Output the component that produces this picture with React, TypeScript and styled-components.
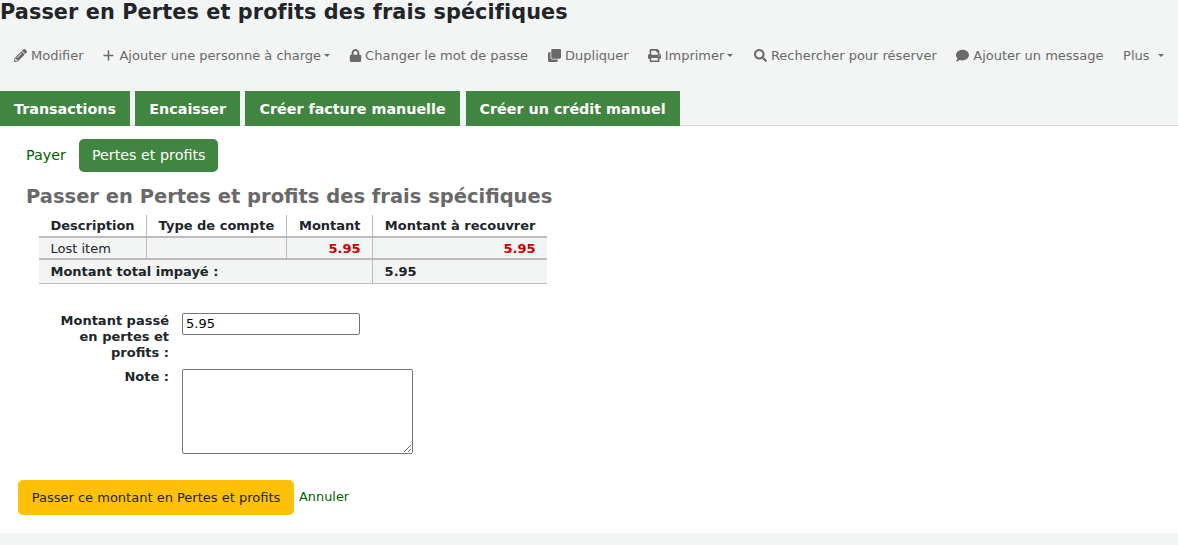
import React, { FC } from 'react';
import styled, { createGlobalStyle } from 'styled-components';
import { FaPencilAlt, FaLock, FaClone, FaPrint, FaSearch, FaComment } from 'react-icons/fa';

const GlobalStyle = createGlobalStyle`
	html, body {
		margin: 0;
		padding: 0;
		height: 545px;
		overflow: hidden;
		background: #f3f4f4;
		font-family: 'DejaVu Sans', sans-serif;
		font-size: 13px;
		color: #212529;
	}
	* { box-sizing: border-box; }
`;

const Title = styled.h1`
	margin: 0;
	height: 24px;
	font-size: 20.8px;
	line-height: 24px;
	font-weight: 700;
	letter-spacing: 0.1px;
`;

const Toolbar = styled.div`
	display: flex;
	align-items: center;
	height: 63px;
	margin-bottom: 4px;
	padding: 0 0 0 14px;
	color: #696969;
`;

const ToolItem = styled.span<{ $gap: number; $iconGap?: number }>`
	display: inline-flex;
	align-items: center;
	margin-right: ${(p) => p.$gap}px;
	font-size: 13px;
	white-space: nowrap;
	svg { margin-right: ${(p) => p.$iconGap ?? 4}px; font-size: 13px; }
`;

const Caret = styled.i<{ $left?: number }>`
	display: inline-block;
	margin-left: ${(p) => p.$left ?? 3}px;
	border-top: 3.5px solid #696969;
	border-left: 3px solid transparent;
	border-right: 3px solid transparent;
`;

const Tabs = styled.div`
	display: flex;
	gap: 5.4px;
	height: 35px;
	border-bottom: 1px solid #dcdcdc;
`;

const Tab = styled.div`
	display: flex;
	align-items: center;
	height: 35px;
	padding: 0 14px;
	background: #408540;
	color: #fff;
	font-size: 14.3px;
	font-weight: 700;
	white-space: nowrap;
	&:last-child { margin-left: 0.6px; }
`;

const Panel = styled.main`
	height: 407px;
	background: #fff;
	padding: 13px 18px 0;
`;

const Pills = styled.div`
	display: flex;
	align-items: center;
	height: 33px;
	padding-left: 8px;
	line-height: 33px;
`;

const PillLink = styled.a`
	color: #006100;
	font-size: 14.3px;
	margin-right: 13px;
`;

const ActivePill = styled.span`
	display: block;
	height: 33px;
	padding: 0 13px;
	border-radius: 5px;
	background: #408540;
	color: #fff;
	font-size: 14.3px;
`;

const Heading = styled.h2`
	margin: 13px 0 0 8px;
	height: 24px;
	font-size: 19.5px;
	line-height: 24px;
	font-weight: 700;
	color: #696969;
`;

const Table = styled.table`
	margin: 6px 0 0 21px;
	width: 508px;
	border-collapse: collapse;
	font-size: 13px;
`;

const Th = styled.th<{ $w?: number; $right?: boolean }>`
	width: ${(p) => (p.$w ? `${p.$w}px` : 'auto')};
	height: 22px;
	padding: 0 11.5px;
	font-weight: 700;
	text-align: ${(p) => (p.$right ? 'right' : 'left')};
	border-left: 1px solid #bcbcbc;
	border-bottom: 2px solid #bcbcbc;
	white-space: nowrap;
	&:first-child { border-left: 0; }
`;

const Td = styled.td<{ $right?: boolean; $money?: boolean; $bold?: boolean }>`
	height: 22px;
	padding: 0 11.5px;
	background: #f3f4f4;
	text-align: ${(p) => (p.$right ? 'right' : 'left')};
	font-weight: ${(p) => (p.$money || p.$bold ? 700 : 400)};
	color: ${(p) => (p.$money ? '#cc0000' : 'inherit')};
	border-left: 1px solid #bcbcbc;
	&:first-child { border-left: 0; }
`;

const BodyRow = styled.tr`
	td { border-bottom: 2px solid #bcbcbc; }
`;

const FootRow = styled.tr`
	td { border-bottom: 1px solid #bcbcbc; height: 24px; }
`;

const Form = styled.form`
	margin-top: 29px;
`;

const Row = styled.div`
	display: flex;
	align-items: flex-start;
	margin-bottom: 8px;
`;

const Label = styled.label`
	width: 151px;
	flex: none;
	padding-left: 30px;
	text-align: right;
	font-size: 13px;
	line-height: 16px;
	font-weight: 700;
`;

const Field = styled.input`
	width: 178px;
	height: 22px;
	margin-left: 13px;
	padding: 0 3px;
	border: 1px solid #767676;
	border-radius: 2px;
	background: #fff;
	font-family: inherit;
	font-size: 13px;
	color: #000;
`;

const Area = styled.textarea`
	display: block;
	width: 231px;
	height: 85px;
	margin-left: 13px;
	border: 1px solid #767676;
	border-radius: 2px;
	background: #fff;
`;

const Actions = styled.div`
	display: flex;
	align-items: center;
	margin-top: 26px;
`;

const Submit = styled.button`
	height: 35px;
	width: 276px;
	padding: 0;
	border: 0;
	border-radius: 5px;
	background: #ffc107;
	color: #212529;
	font-family: inherit;
	font-size: 13px;
`;

const Cancel = styled.a`
	margin: 0 0 2px 5px;
	color: #006100;
	font-size: 12.9px;
`;

const ThinPlus: FC = () => (
	<svg width="12.9" height="13" viewBox="0 0 12.9 13">
		<path d="M5.5 1.5v10M.5 6.5h10" stroke="#696969" strokeWidth="1.5" fill="none" />
	</svg>
);

const App: FC = () => {
	return (
		<>
			<GlobalStyle />
			<Title>Passer en Pertes et profits des frais spécifiques</Title>
			<Toolbar>
				<ToolItem $gap={19}><FaPencilAlt />Modifier</ToolItem>
				<ToolItem $gap={19}><ThinPlus />Ajouter une personne à charge<Caret /></ToolItem>
				<ToolItem $gap={20} $iconGap={3}><FaLock />Changer le mot de passe</ToolItem>
				<ToolItem $gap={19}><FaClone />Dupliquer</ToolItem>
				<ToolItem $gap={21}><FaPrint />Imprimer<Caret /></ToolItem>
				<ToolItem $gap={19.5} $iconGap={3.5}><FaSearch />Rechercher pour réserver</ToolItem>
				<ToolItem $gap={19.5}><FaComment />Ajouter un message</ToolItem>
				<ToolItem $gap={0}>Plus<Caret $left={8} /></ToolItem>
			</Toolbar>
			<Tabs>
				<Tab>Transactions</Tab>
				<Tab>Encaisser</Tab>
				<Tab>Créer facture manuelle</Tab>
				<Tab>Créer un crédit manuel</Tab>
			</Tabs>
			<Panel>
				<Pills>
					<PillLink>Payer</PillLink>
					<ActivePill>Pertes et profits</ActivePill>
				</Pills>
				<Heading>Passer en Pertes et profits des frais spécifiques</Heading>
				<Table>
					<thead>
						<tr>
							<Th $w={107}>Description</Th>
							<Th $w={140}>Type de compte</Th>
							<Th $w={86} $right>Montant</Th>
							<Th $right>Montant à recouvrer</Th>
						</tr>
					</thead>
					<tbody>
						<BodyRow>
							<Td>Lost item</Td>
							<Td />
							<Td $right $money>5.95</Td>
							<Td $right $money>5.95</Td>
						</BodyRow>
						<FootRow>
							<Td colSpan={3} $bold>Montant total impayé :</Td>
							<Td $bold>5.95</Td>
						</FootRow>
					</tbody>
				</Table>
				<Form>
					<Row>
						<Label>Montant passé en pertes et profits :</Label>
						<Field defaultValue="5.95" />
					</Row>
					<Row>
						<Label>Note :</Label>
						<Area />
					</Row>
					<Actions>
						<Submit type="button">Passer ce montant en Pertes et profits</Submit>
						<Cancel>Annuler</Cancel>
					</Actions>
				</Form>
			</Panel>
		</>
	);
};

export default App;
